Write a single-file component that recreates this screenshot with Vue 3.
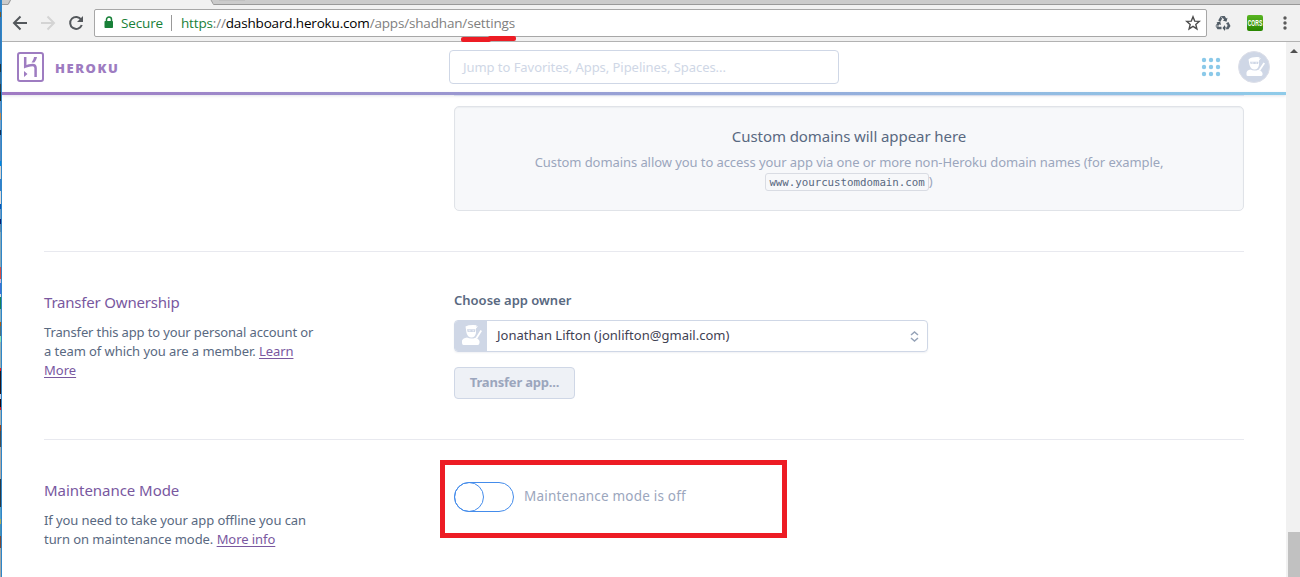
<script setup>
const edge = [
  [0, 12, '#2f7fc4'], [12, 5, '#7b5a2a'], [17, 47, '#3479b8'], [64, 8, '#22333b'], [72, 12, '#366c94'],
  [84, 8, '#30424c'], [92, 9, '#20281f'], [101, 12, '#5f8fc0'], [113, 7, '#c58a4c'], [120, 10, '#79a2c8'],
  [130, 5, '#152d52'], [135, 26, '#568ac0'], [161, 5, '#0087e0'], [166, 13, '#d7d2d0'], [179, 12, '#337fca'],
  [191, 13, '#e0dad8'], [204, 5, '#0756b8'], [209, 10, '#6e9bc4'], [219, 5, '#081b6c'], [224, 8, '#5f8aac'],
  [232, 35, '#88a9b8'], [267, 12, '#d94d43'], [279, 4, '#cdbcd8'], [283, 11, '#3c70d8'], [294, 3, '#d7dce0'],
  [297, 12, '#168257'], [309, 13, '#8bb1bf'], [322, 4, '#ae5c13'], [326, 10, '#50707e'], [336, 6, '#8be6b5'],
  [342, 26, '#98b0b4'], [368, 3, '#f01910'], [371, 23, '#261417'], [394, 5, '#c7cbe0'], [399, 8, '#22080c'],
  [407, 3, '#e31515'], [410, 15, '#a7b2b3'], [425, 6, '#98451b'], [431, 16, '#4b4c4c'], [447, 32, '#afa9a5'],
  [479, 28, '#2d3941'], [507, 12, '#56a2cb'], [519, 5, '#b3ae58'], [524, 12, '#4991b5'], [536, 12, '#7c4936'],
  [548, 29, '#a5a8a7'],
].map(([y, height, color]) => ({ y, height, color }))
</script>

<template>
  <div class="window">
    <div class="edge">
      <i v-for="s in edge" :key="s.y" :style="{ height: s.height + 'px', background: s.color }"></i>
    </div>
    <div class="browser">
      <div class="tabs">
        <svg width="1298" height="5" viewBox="0 0 1298 5">
          <path d="M0 0H9L7 4.500H0zM209 0H1298V4.500H212z" fill="#cbcbcb" />
          <path d="M0 4.500H6L8.500 0M209 0L211.500 4.500H1298" fill="none" stroke="#999" />
          <path d="M217 0H243" stroke="#b5b5b5" />
        </svg>
      </div>
      <div class="toolbar">
        <svg class="nav" width="92" height="34" viewBox="2 6 92 34" fill="none">
          <path d="M27 23H14.500M20.500 16.500L14 23L20.500 29.500" stroke="#54585c" stroke-width="2" />
          <path d="M41 23H53.500M47.500 16.500L54 23L47.500 29.500" stroke="#d4d4d4" stroke-width="2" />
          <path d="M81.200 19.600A6 6 0 1 0 81.800 25" stroke="#54585c" stroke-width="2" />
          <path d="M83 16V22H77z" fill="#54585c" />
        </svg>
        <div class="omnibox">
          <svg class="lock" width="10" height="13" viewBox="0 0 10 13">
            <path d="M2.500 6V3.500a2.500 2.500 0 0 1 5 0V6" fill="none" stroke="#188038" stroke-width="1.500" />
            <rect x="0.500" y="5" width="8.500" height="7" rx="0.800" fill="#188038" />
          </svg>
          <span class="secure">Secure</span>
          <span class="bar"></span>
          <span class="url"><span class="scheme">https</span><span>://</span><b>dashboard.heroku.com</b><span>/apps/shadhan/settings</span></span>
          <svg class="star" width="16" height="16" viewBox="0 0 16 16">
            <path d="M8 1.800L9.700 6.100L14.300 6.400L10.800 9.400L11.900 13.900L8 11.400L4.100 13.900L5.200 9.400L1.700 6.400L6.300 6.100Z" fill="none" stroke="#4d4d4d" stroke-width="1.400" />
          </svg>
        </div>
        <svg class="recycle" width="16" height="16" viewBox="0 0 16 16" fill="none" stroke="#55606a" stroke-width="2.600">
          <path d="M4.300 6.200L6.500 2.200H9L10.600 5M12.300 7.600L14 11L12.700 13H9.300M6.500 13H3.200L2 11L3.700 8.200" />
          <path d="M12.500 2.800L11.500 6.800L7.800 5.500zM10 10V16L7.500 13zM1.400 7.500L5.200 6.500L6 10z" fill="#4d5861" stroke="none" />
          <path d="M6 1.500L8.500 5M1 11H5M12 9.500L10.500 14" stroke="#f1f1f1" stroke-width="0.700" />
        </svg>
        <span class="cors"><span>CORS</span></span>
        <svg class="menu" width="4" height="14" viewBox="0 0 4 14" fill="#5a5a5a">
          <circle cx="2" cy="2" r="1.700" /><circle cx="2" cy="7" r="1.700" /><circle cx="2" cy="12" r="1.700" />
        </svg>
        <i class="mark mark-a"></i><i class="mark mark-b"></i>
      </div>

      <div class="viewport">
        <div class="page">
          <header class="header">
            <svg class="logo" width="27" height="30" viewBox="0 0 27 30">
              <rect x="1" y="1" width="25" height="28" rx="2" fill="none" stroke="#9e7cc1" stroke-width="2" />
              <path d="M8.200 5V14.600C11 13.400 13 12.900 15.500 12.900C17.800 12.900 18.600 14 18.600 16V25" fill="none" stroke="#9e7cc1" stroke-width="2.500" />
              <path d="M7 19L10.500 22L7 25zM17 5H20C19.600 7.300 18.700 9 17.300 10.400H14.500C16 8.700 16.700 7 17 5z" fill="#9e7cc1" />
            </svg>
            <span class="brand">HEROKU</span>
            <div class="search"><span>Jump to Favorites, Apps, Pipelines, Spaces...</span></div>
            <svg class="grid" width="20" height="20" viewBox="0 0 20 20" fill="#8bc9e9">
              <template v-for="y in 3" :key="y">
                <circle v-for="x in 3" :key="x" :cx="x * 7 - 4" :cy="y * 7 - 4" r="2.200" />
              </template>
            </svg>
            <svg class="avatar" width="32" height="32" viewBox="0 0 32 32">
              <circle cx="16" cy="16" r="15.500" fill="#cfd7e6" stroke="#dddfe8" />
              <g fill="#fff">
                <path d="M10.500 8.500Q14 5.500 21.800 6.200L20.700 7.600L23 7.200L21 9.500V14Q20 18.500 16.500 18.500Q13 18.500 11.500 14zM8.500 24V21.500Q9 19.300 12.500 18.600Q16 20.500 20.500 18.700Q24 20 24.500 22V24Q24 25 23 25H10Q8.500 25 8.500 24z" />
                <path d="M20.500 19L25.500 11.500L27 12.400L22 20z" />
              </g>
              <path d="M12 10.800H20.500L20 13H12.700z" fill="#cfd7e6" />
              <path d="M13.500 12H15.500M17.500 12H19" stroke="#fff" stroke-width="0.800" />
            </svg>
          </header>
          <div class="rainbow"></div>
          <main class="main">
            <div class="table-end"></div>
            <section class="empty">
              <h3><span class="t-domains">Custom domains will appear here</span></h3>
              <p><span class="t-allow">Custom domains allow you to access your app via one or more non-Heroku domain names (for example,</span></p>
              <p class="second"><code>www.yourcustomdomain.com</code><span>)</span></p>
            </section>

            <section class="row transfer">
              <div class="about">
                <h2><span class="t-own">Transfer Ownership</span></h2>
                <p><span class="t-p1">Transfer this app to your personal account or</span><br /><span class="t-p2">a team of which you are a member. <a>Learn</a></span><br /><a>More</a></p>
              </div>
              <div class="controls">
                <label>Choose app owner</label>
                <div class="select">
                  <span class="thumb">
                    <svg width="32" height="30" viewBox="0 0 32 30">
                      <g fill="#fff">
                        <path d="M10.500 5.500Q14 3.500 21.800 4.200L20.700 5.600L23 5.200L21 7.500V12Q20 16.500 16.500 16.500Q13 16.500 11.500 12zM7 22V19.500Q8 17.300 12 16.600Q16 18.500 20.500 16.700Q24 18 24.500 20V22Q24 24 23 24H8.500Q7 24 7 22z" />
                        <path d="M20.500 17L25.500 9L27 10L22 18z" />
                      </g>
                      <path d="M12 8.300H20.500L20 11H12.700z" fill="#cfd7e6" />
                      <path d="M13.500 9.800H15.500M17.500 9.800H19" stroke="#fff" stroke-width="0.800" />
                    </svg>
                  </span>
                  <span class="owner">Jonathan Lifton (jonlifton@gmail.com)</span>
                  <svg class="arrows" width="9" height="11" viewBox="0 0 9 11" fill="none" stroke="#96a3b8" stroke-width="1.500">
                    <path d="M1 4L4.500 1L8 4M1 7L4.500 10L8 7" />
                  </svg>
                </div>
                <button><span class="t-btn">Transfer app...</span></button>
              </div>
            </section>

            <section class="row maintenance">
              <div class="about">
                <h2><span class="t-mode">Maintenance Mode</span></h2>
                <p><span class="t-m1">If you need to take your app offline you can</span><br /><span class="t-m2">turn on maintenance mode. <a>More info</a></span></p>
              </div>
              <div class="controls">
                <div class="toggle-row">
                  <span class="toggle"><i></i></span>
                  <span class="off">Maintenance mode is off</span>
                </div>
                <div class="highlight"></div>
              </div>
            </section>
          </main>
        </div>
        <div class="scrollbar">
          <svg width="14" height="18" viewBox="0 0 14 18"><path d="M4 11L8 7L12 11z" fill="#505050" /></svg>
          <div class="scroll-thumb"></div>
        </div>
      </div>
    </div>
  </div>
</template>

<style scoped>
* { box-sizing: border-box; }
.window { display: flex; width: 1300px; height: 577px; overflow: hidden; background: #fff; font-family: "Noto Sans", "Open Sans", sans-serif; font-size: 13px; white-space: nowrap; }
.edge { width: 2px; flex: none; border-right: 1px solid #2e86c9; }
.edge i { display: block; }
.browser { flex: 1; min-width: 0; display: flex; flex-direction: column; }
.tabs { height: 5px; flex: none; background: #f1f1f1; }
.tabs svg { display: block; }
.toolbar { position: relative; height: 37px; flex: none; display: flex; align-items: center; background: #f1f1f1; border-bottom: 1px solid #b2b2b2; }
.nav { flex: none; }
.omnibox { width: 1113px; height: 28px; flex: none; border: 1px solid #a7a7a7; border-radius: 2px; background: #fff; display: flex; align-items: center; padding-left: 8px; font-family: "Open Sans", sans-serif; font-size: 13.500px; color: #808080; }
.lock { margin: -1px 7px 0 1px; }
.secure { width: 50px; color: #188038; letter-spacing: -0.150px; }
.bar { width: 1px; height: 16px; background: #999; margin-right: 9px; }
.url { flex: 1; letter-spacing: -0.165px; }
.url b { color: #000; font-weight: 400; }
.url .scheme { color: #188038; }
.star { margin-right: 5px; }
.recycle { margin-left: 8px; }
.cors { width: 16px; height: 16px; margin-left: 16px; border-radius: 2px; background: linear-gradient(#59b522, #288600); color: #fff; font: bold 9px "Liberation Sans", sans-serif; display: flex; align-items: center; justify-content: center; }
.cors span { transform: scaleX(0.560); }
.menu { margin-left: 20px; }
.mark { position: absolute; height: 5px; border-radius: 2px; background: #ed1c24; }
.mark-a { left: 459px; top: 32px; width: 30px; }
.mark-b { left: 486px; top: 31px; width: 28px; }
.viewport { flex: 1; min-height: 0; display: flex; }
.page { width: 1284px; display: flex; flex-direction: column; overflow: hidden; }
.header { height: 50px; flex: none; display: flex; align-items: center; }
.logo { margin-left: 15px; }
.brand { width: 394px; margin-left: 11px; padding-top: 1px; font-family: "Open Sans", sans-serif; font-size: 13px; font-weight: 800; letter-spacing: 1.550px; color: #9e7cc1; }
.search { width: 390px; height: 34px; border: 1px solid #cfd7e6; border-radius: 4px; display: flex; align-items: center; padding-left: 13px; color: #cfd7e6; font-size: 13px; letter-spacing: -0.050px; }
.grid { margin-left: 362px; }
.avatar { margin-left: 17px; }
.rainbow { height: 3px; flex: none; background: linear-gradient(90deg, #a07ac3, #8fcbe9); box-shadow: 0 1px 3px rgba(60, 70, 100, 0.150); }
.main { width: 1200px; margin-left: 42px; color: #596981; }
.table-end { height: 1px; margin-left: 410px; background: #d7dcec; }
.empty { height: 105px; margin: 10px 0 0 410px; border: 1px solid #e0e3e8; border-radius: 5px; background: #f7f8fa; text-align: center; padding-top: 18px; box-shadow: inset 0 1px 1px #eceef1; }
h2, h3, p { margin: 0; font-weight: 400; }
h3 { font-size: 15px; line-height: 22px; color: #596981; }
.empty p { line-height: 19px; margin-top: 6px; color: #9ba6bd; }
.empty p.second { margin-top: 0; display: flex; justify-content: center; align-items: center; }
code { height: 18px; line-height: 17px; border: 1px solid #d9dce3; border-radius: 3px; padding: 0 3px; font-family: "DejaVu Sans Mono", monospace; font-size: 10.800px; color: #596981; letter-spacing: -0.030px; }
.t-domains { letter-spacing: -0.070px; }
.t-allow { letter-spacing: -0.075px; }
.t-own { letter-spacing: -0.200px; }
.t-mode { letter-spacing: -0.040px; }
.t-p1 { letter-spacing: -0.135px; }
.t-p2 { letter-spacing: -0.070px; }
.t-m1 { letter-spacing: -0.080px; }
.t-m2 { letter-spacing: -0.060px; }
.t-btn { letter-spacing: -0.200px; }
.row { display: flex; border-top: 1px solid #e8e9ef; }
.transfer { height: 188px; margin-top: 40px; }
.maintenance { height: 160px; }
.about { width: 410px; flex: none; padding-top: 39px; }
.about h2 { font-size: 15px; line-height: 22px; color: #79589f; }
.about p { line-height: 19px; margin-top: 10px; }
a { color: #79589f; text-decoration: underline; text-underline-offset: 2px; }
.controls { position: relative; flex: 1; }
label { display: block; margin-top: 38px; line-height: 20px; font-weight: 600; }
.select { width: 474px; height: 32px; margin-top: 10px; border: 1px solid #cfd7e6; border-radius: 4px; display: flex; align-items: center; overflow: hidden; box-shadow: 0 1px 2px #f0f1f4; color: #3f4254; }
.thumb { width: 32px; height: 30px; background: #cfd7e6; }
.thumb svg { display: block; }
.owner { flex: 1; margin-left: 10px; padding-bottom: 2px; letter-spacing: 0.020px; }
.arrows { margin-right: 8px; }
button { display: flex; align-items: center; justify-content: center; width: 121px; height: 32px; margin-top: 15px; padding: 0 0 2px; border: 1px solid #cfd7e6; border-radius: 4px; background: #eef1f6; color: #9ba6bd; font: 700 13px "Noto Sans", sans-serif; }
.toggle-row { display: flex; align-items: center; margin-top: 42px; }
.toggle { width: 60px; height: 30px; border: 1px solid #448ceb; border-radius: 15px; }
.toggle i { display: block; width: 30px; height: 30px; margin: -1px; border: 1px solid #448ceb; border-radius: 50%; }
.off { margin-left: 10px; padding-bottom: 2px; color: #9ba6bd; font-size: 13.500px; letter-spacing: 0.210px; }
.highlight { position: absolute; left: -14px; top: 20px; width: 347px; height: 78px; border: 5px solid #ed1c24; }
.scrollbar { width: 14px; background: #f1f1f1; display: flex; flex-direction: column; }
.scroll-thumb { margin: 472px 0 0 2px; height: 45px; flex: none; background: #c1c1c1; }
</style>
